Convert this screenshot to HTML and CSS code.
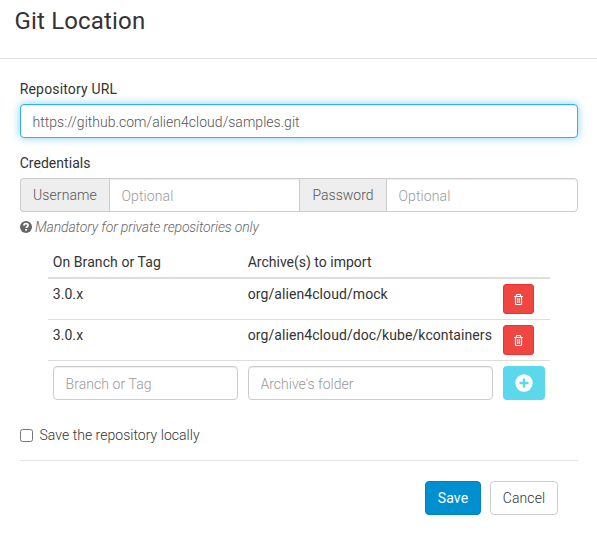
FILE: index.html
```html
<!DOCTYPE html>
<html lang="en">
<head>
<meta charset="utf-8">
<title>Git Location</title>
<link rel="stylesheet" href="styles.css">
</head>
<body>
<header class="modal-header"><h1>Git Location</h1></header>
<main class="modal-body">
  <label class="field-label" for="url">Repository URL</label>
  <input class="form-control focused" id="url" type="text" value="https://github.com/alien4cloud/samples.git">
  <div class="field-label credentials">Credentials</div>
  <div class="input-group">
    <span class="addon user">Username</span>
    <input class="form-control" type="text" placeholder="Optional">
    <span class="addon pass">Password</span>
    <input class="form-control" type="text" placeholder="Optional">
  </div>
  <p class="help">
    <svg class="help-icon" width="12" height="12" viewBox="0 0 12 12"><circle cx="6" cy="6" r="6" fill="#666"/><path d="M3.900 4.600C4 3.200 4.900 2.700 6 2.700c1.200 0 2.100.7 2.100 1.700C8.100 5.700 6.200 5.700 6.200 7.100" fill="none" stroke="#fff" stroke-width="1.700"/><path d="M5.200 8h1.900v1.700H5.200z" fill="#fff"/></svg>
    <em>Mandatory for private repositories only</em>
  </p>
  <div class="locations">
    <div class="row head"><span>On Branch or Tag</span><span class="title">Archive(s) to import</span></div>
    <div class="row"><span>3.0.x</span><span>org/alien4cloud/mock</span>
      <button class="btn-delete" type="button" aria-label="Delete"><svg width="9" height="11" viewBox="0 0 9 11" fill="none" stroke="#fff"><path d="M0 2.500h9M2.500 2.500V1.200Q2.500.5 3.200.5h2.600Q6.500.5 6.500 1.200v1.300" stroke-width="1.200"/><path d="M1.500 2.500v7q0 1 1 1h4q1 0 1-1v-7" stroke-width="1.200"/><path d="M3.500 4v5M5.500 4v5" stroke-width="1" opacity=".75"/><path d="M4.500 4v5" opacity=".4"/></svg></button>
    </div>
    <div class="row"><span>3.0.x</span><span>org/alien4cloud/doc/kube/kcontainers</span>
      <button class="btn-delete" type="button" aria-label="Delete"><svg width="9" height="11" viewBox="0 0 9 11" fill="none" stroke="#fff"><path d="M0 2.500h9M2.500 2.500V1.200Q2.500.5 3.200.5h2.600Q6.500.5 6.500 1.200v1.300" stroke-width="1.200"/><path d="M1.500 2.500v7q0 1 1 1h4q1 0 1-1v-7" stroke-width="1.200"/><path d="M3.500 4v5M5.500 4v5" stroke-width="1" opacity=".75"/><path d="M4.500 4v5" opacity=".4"/></svg></button>
    </div>
    <div class="row new">
      <input class="form-control" type="text" placeholder="Branch or Tag">
      <input class="form-control folder" type="text" placeholder="Archive's folder">
      <button class="btn-add" type="button" aria-label="Add"><svg width="18" height="18" viewBox="0 0 18 18"><circle cx="9" cy="9" r="8.700" fill="#fff"/><path d="M9 4.500v9M4.500 9h9" stroke="#5bd8ec" stroke-width="2.300"/></svg></button>
    </div>
  </div>
  <label class="check"><input type="checkbox">Save the repository locally</label>
  <footer class="actions">
    <button class="btn save" type="button">Save</button>
    <button class="btn cancel" type="button">Cancel</button>
  </footer>
</main>
</body>
</html>
```
FILE: styles.css
```css
* { box-sizing: border-box; }
body {
  margin: 0;
  background: #fff;
  color: #333;
  font: 300 14px/20px Roboto, sans-serif;
  letter-spacing: 0.1px;
}
input, button { font: inherit; letter-spacing: inherit; margin: 0; }
.modal-header { height: 59px; padding: 8px 14.5px 0; border-bottom: 1px solid #e5e5e5; }
h1 { margin: 0; font-size: 24px; line-height: 26px; font-weight: 400; letter-spacing: 0.17px; }
.modal-body { padding: 20px 19px 0 20px; }
.field-label { display: block; height: 25px; margin-left: -0.3px; font-weight: 400; letter-spacing: 0.17px; }
.credentials { margin-top: 15px; letter-spacing: 0.03px; }
.form-control {
  display: block;
  width: 100%;
  min-width: 0;
  height: 34px;
  padding: 7px 11.5px 5px;
  border: 1px solid #ccc;
  border-radius: 4px;
  background: #fff;
  color: #555;
  box-shadow: inset 0 1px 1px rgba(0, 0, 0, .075);
  outline: none;
}
.form-control::placeholder { color: #999; opacity: 1; }
.focused {
  border-color: #33b0ea;
  letter-spacing: 0.03px;
  box-shadow: inset 0 1px 1px rgba(0, 0, 0, .075), 0 0 8px rgba(51, 176, 234, .6);
}
.input-group { display: grid; grid-template-columns: 89px 191px 86px 192px; letter-spacing: 0.1px; }
.input-group .form-control { border-radius: 0; padding-left: 11.5px; }
.input-group .form-control:last-child { border-radius: 0 4px 4px 0; }
.addon { padding: 6px 0 0 12px; background: #eee; color: #555; border: 1px solid #ccc; border-right: 0; }
.user { border-radius: 4px 0 0 4px; }
.pass { border-left: 0; letter-spacing: 0; padding-left: 12.5px; }
.help { display: flex; gap: 3.5px; margin: 5px 0 0; height: 30px; color: #666; letter-spacing: -0.14px; }
.help-icon { flex: none; margin: 4px 0 0 -0.5px; }
.locations { width: 502px; margin-left: 28px; }
.row {
  display: grid;
  grid-template-columns: 185px 245px 42px;
  column-gap: 10px;
  height: 41px;
  padding: 5px 5px 0;
  border-bottom: 1px solid #ddd;
  font-weight: 400;
  white-space: nowrap;
  letter-spacing: 0.08px;
}
.row span { margin-left: -0.3px; }
.row.head { height: 32px; border-bottom-width: 2px; }
.title { letter-spacing: 0; }
.row.new { height: 60px; border-bottom: 0; font-weight: 300; }
.folder { letter-spacing: 0; }
.btn-delete {
  display: flex;
  align-items: center;
  justify-content: center;
  width: 31px;
  height: 30px;
  padding: 1px 0 0;
  background: #f04642;
  border: 1px solid #ee312c;
  border-radius: 3px;
}
.btn-add {
  display: flex;
  align-items: center;
  justify-content: center;
  width: 42px;
  height: 34px;
  padding: 0;
  border: 0;
  border-radius: 4px;
  background: #5bd8ec;
}
.check { display: flex; align-items: center; gap: 6.5px; margin-top: 4px; height: 20px; letter-spacing: 0.03px; }
.check input { width: 13px; height: 13px; }
.actions {
  display: flex;
  justify-content: flex-end;
  gap: 9px;
  margin-top: 15px;
  padding: 20px 20px 0 0;
  border-top: 1px solid #e5e5e5;
}
.btn { height: 34px; padding: 0; border: 1px solid #ccc; border-radius: 4px; background: #fff; color: #333; }
.save { width: 56px; background: #008fd0; border-color: #0082c0; color: #fff; font-weight: 400; }
.cancel { width: 68px; }
```
